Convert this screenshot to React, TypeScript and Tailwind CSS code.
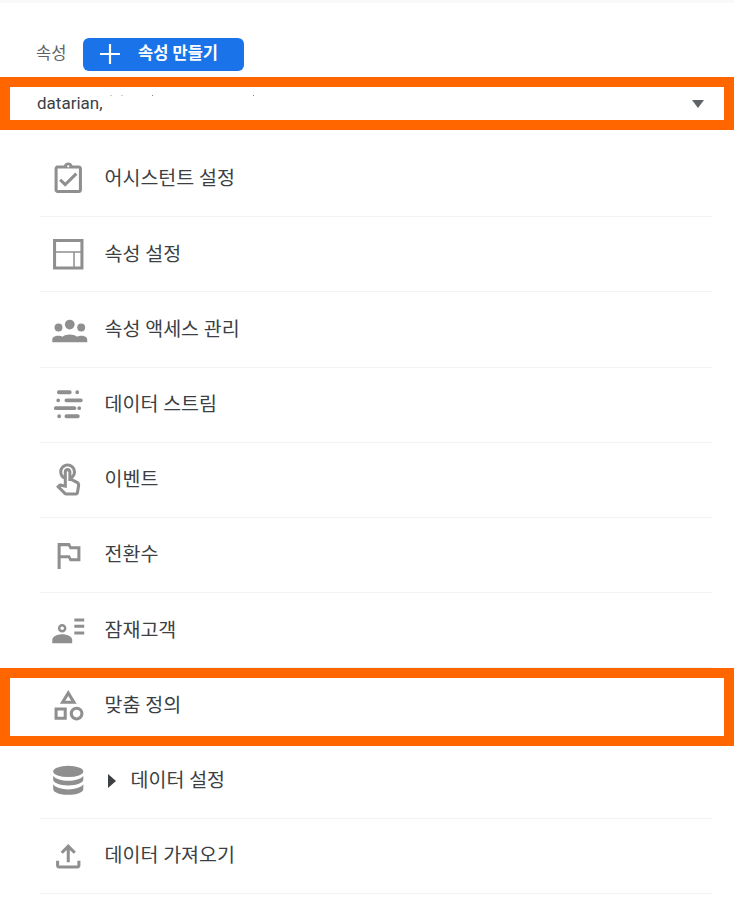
import React from "react";

const G = "#8f8f8f";

function Ic({ children }: { children: React.ReactNode }) {
  return (
    <svg viewBox="0 0 24 24" width="36.5" height="36.5" fill={G} className="shrink-0 overflow-visible">
      {children}
    </svg>
  );
}

const icons: Record<string, React.ReactNode> = {
  assistant: (
    <Ic>
      <path d="M18 9l-1.41-1.42L10 14.17l-2.59-2.58L6 13l4 4zm1-6h-4.18C14.4 1.84 13.3 1 12 1c-1.3 0-2.4.84-2.82 2H5c-.14 0-.27.01-.4.04-.39.08-.74.28-1.01.55-.18.18-.33.4-.43.64-.1.23-.16.49-.16.77v14c0 .27.06.54.16.78s.25.45.43.64c.27.27.62.47 1.01.55.13.02.26.03.4.03h14c1.1 0 2-.9 2-2V5c0-1.1-.9-2-2-2zm-7-.25c.41 0 .75.34.75.75s-.34.75-.75.75-.75-.34-.75-.75.34-.75.75-.75zM19 19H5V5h14v14z" />
    </Ic>
  ),
  web: (
    <Ic>
      <path d="M3 3h18v18H3z" fill="none" stroke={G} strokeWidth="2" />
      <path d="M3 10.500h18M15.800 10.500V21" fill="none" stroke={G} strokeWidth="1" />
    </Ic>
  ),
  group: (
    <Ic>
      <circle cx="5.600" cy="10.900" r="2.600" />
      <circle cx="13" cy="8.900" r="3.200" />
      <circle cx="20.500" cy="10.900" r="2.600" />
      <path d="M1.500 20.600v-1.800c0-1.500 1.600-2.600 3.900-2.600 1.100 0 2 .2 2.800.7 1.200-.9 3-1.400 4.800-1.400s3.600.5 4.800 1.400c.8-.5 1.700-.7 2.800-.7 2.300 0 3.900 1.100 3.900 2.600v1.800z" />
    </Ic>
  ),
  stream: (
    <Ic>
      <path
        d="M5.800 4.100H13M17.900 4.100h.01M5.400 9.400h.01M10.800 9.400h9.500M3.800 14.600h12.300M19.200 14.600h.01M6 19.900h.01M10.800 19.900h7.500"
        fill="none"
        stroke={G}
        strokeWidth="2.500"
        strokeLinecap="round"
      />
    </Ic>
  ),
  touch: (
    <Ic>
      <path d="M18.190 12.440l-3.240-1.620c1.290-1 2.120-2.560 2.120-4.320C17.070 3.470 14.600 1 11.570 1 8.540 1 6.070 3.470 6.070 6.500c0 2.130 1.220 3.980 3 4.890v3.260c-2.150-.46-2.020-.44-2.260-.44-.53 0-1.030.21-1.410.59L4 16.220l5.090 5.090C9.520 21.750 10.120 22 10.740 22h6.300c.98 0 1.810-.7 1.970-1.670l.8-4.710c.22-1.300-.43-2.580-1.620-3.180zm-.35 2.850l-.8 4.710h-6.300c-.09 0-.17-.04-.24-.1l-3.680-3.680 4.250.89V6.500c0-.28.22-.5.5-.5s.5.22.5.5v6h1.760l3.460 1.730c.4.2.62.63.55 1.060zM8.070 6.500c0-1.930 1.570-3.500 3.500-3.500s3.500 1.570 3.500 3.500c0 .95-.38 1.810-1 2.440V6.500c0-1.380-1.120-2.500-2.500-2.500s-2.500 1.120-2.500 2.500v2.440c-.62-.63-1-1.490-1-2.440z" />
    </Ic>
  ),
  flag: (
    <Ic>
      <path d="M14 6l-1-2H5v17h2v-7h5l1 2h7V6h-6zm4 8h-4l-1-2H7V6h5l1 2h5v6z" />
    </Ic>
  ),
  audience: (
    <Ic>
      <circle cx="8" cy="10.700" r="2" fill="none" stroke={G} strokeWidth="1.600" />
      <path d="M1.500 20.500v-2.200c0-2.300 3.500-3.700 6.500-3.700s6.600 1.400 6.600 3.700v2.200z" />
      <path d="M16 5.300h6.500M16 9.400h6.500M16 13.800h6.500" fill="none" stroke={G} strokeWidth="1.900" />
    </Ic>
  ),
  category: (
    <Ic>
      <path d="M12 2l-5.500 9h11L12 2zm0 3.840L13.930 9h-3.870L12 5.840zM17.500 13c-2.490 0-4.500 2.010-4.500 4.500s2.010 4.500 4.500 4.500 4.500-2.010 4.500-4.500-2.010-4.500-4.500-4.500zm0 7c-1.380 0-2.500-1.120-2.500-2.500s1.120-2.500 2.500-2.500 2.500 1.120 2.500 2.500-1.120 2.500-2.500 2.500zM3 21.500h8v-8H3v8zm2-6h4v4H5v-4z" />
    </Ic>
  ),
  database: (
    <Ic>
      <ellipse cx="12" cy="6.200" rx="9.900" ry="3.700" />
      <path d="M2.100 9v2.700c0 2 4.400 3.700 9.900 3.700s9.900-1.700 9.900-3.700V9c-1.500 2.200-5.500 3.300-9.900 3.300S3.600 11.200 2.100 9z" />
      <path d="M2.100 14.700v3.200c0 2 4.400 3.700 9.900 3.700s9.900-1.700 9.900-3.700v-3.200c-1.500 2.200-5.500 3.300-9.900 3.300s-8.400-1.100-9.900-3.300z" />
    </Ic>
  ),
  upload: (
    <Ic>
      <path d="M18 15v3H6v-3H4v3c0 1.100.9 2 2 2h12c1.100 0 2-.9 2-2v-3h-2zM7 9l1.410 1.410L11 7.830V16h2V7.830l2.590 2.580L17 9l-5-5-5 5z" />
    </Ic>
  ),
};

const rows = [
  { icon: "assistant", label: "어시스턴트 설정" },
  { icon: "web", label: "속성 설정" },
  { icon: "group", label: "속성 액세스 관리" },
  { icon: "stream", label: "데이터 스트림" },
  { icon: "touch", label: "이벤트" },
  { icon: "flag", label: "전환수" },
  { icon: "audience", label: "잠재고객" },
  { icon: "category", label: "맞춤 정의", highlight: true },
  { icon: "database", label: "데이터 설정", caret: true },
  { icon: "upload", label: "데이터 가져오기" },
];

export default function App() {
  return (
    <div
      className="w-[734px] h-[900px] overflow-hidden bg-white text-[#3c4043]"
      style={{ fontFamily: '"Roboto", "Noto Sans CJK KR", sans-serif' }}
    >
      <div className="h-[3px] bg-[#f8f9fa]" />
      <div className="flex items-center pt-[35px] pl-[36px]">
        <span className="w-[47px] text-[16.5px] text-[#5f6368]">속성</span>
        <button className="flex h-[33px] w-[161px] items-center rounded-[6px] bg-[#1a73e8] pl-[16px] text-white">
          <svg width="22" height="22" viewBox="0 0 22 22" className="-mt-[2px] shrink-0">
            <path d="M11 1v20M1 11h20" stroke="#fff" strokeWidth="2.200" />
          </svg>
          <span className="ml-[17px] text-[16.5px] font-semibold">속성 만들기</span>
        </button>
      </div>
      <div className="relative mt-[6px] flex h-[53px] items-center justify-between border-[10px] border-[#ff6600] pl-[27px] pr-[20px]">
        <span className="text-[17px]">datarian,</span>
        <span className="h-0 w-0 border-x-[6px] border-t-[8px] border-x-transparent border-t-[#5f6368]" />
        <span className="absolute left-[100px] top-[8px] h-px w-[2px] bg-[#d0d0d0]" />
        <span className="absolute left-[111px] top-[8px] h-px w-[2px] bg-[#d0d0d0]" />
        <span className="absolute left-[142px] top-[8px] h-px w-px bg-[#808080]" />
        <span className="absolute left-[243px] top-[8px] h-px w-px bg-[#808080]" />
      </div>
      <div className="mx-[40px] mt-[12px] w-[672px]">
        {rows.map((r) => (
          <div
            key={r.label}
            className="relative flex h-[75.2px] items-center gap-[18px] border-b border-[#f1f3f4] pl-[10px]"
          >
            {icons[r.icon]}
            {r.caret ? (
              <div className="flex items-center">
                <span className="ml-[3px] mr-[15px] h-0 w-0 border-y-[7.5px] border-l-[8px] border-y-transparent border-l-[#3c4043]" />
                <span className="text-[19.5px]">{r.label}</span>
              </div>
            ) : (
              <span className="text-[19.5px]">{r.label}</span>
            )}
            {r.highlight && (
              <div className="absolute -left-[40px] -right-[22px] top-0 h-[78px] border-[10px] border-[#ff6600]" />
            )}
          </div>
        ))}
      </div>
    </div>
  );
}
